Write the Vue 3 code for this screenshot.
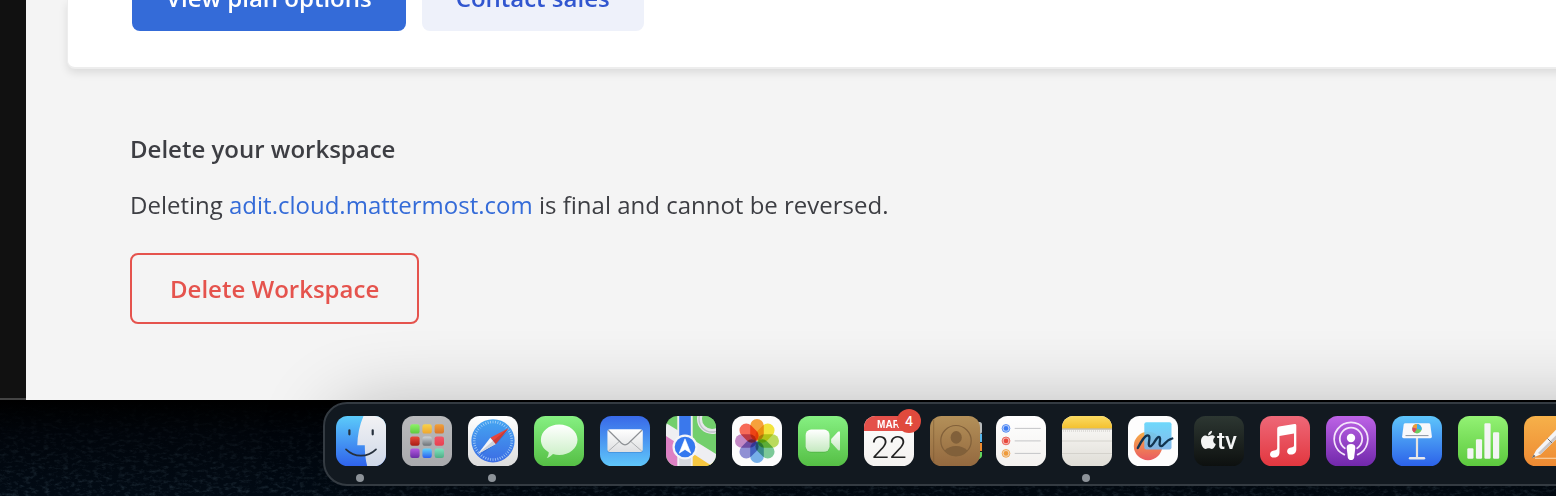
<script setup>
const petals = [
  { angle: 0, color: '#f6a13c' },
  { angle: 45, color: '#f2e33c' },
  { angle: 90, color: '#bada5c' },
  { angle: 135, color: '#7cc997' },
  { angle: 180, color: '#76afe8' },
  { angle: 225, color: '#9090d4' },
  { angle: 270, color: '#c388c4' },
  { angle: 315, color: '#f76a58' },
]

const tiles = [
  ['#8df269', '#5fc93f'], ['#f8d24c', '#efa62f'], ['#f0a13a', '#d9742b'],
  ['#ea4a3c', '#a81d14'], ['#cfd5da', '#6c7277'], ['#f0566a', '#e8414f'],
  ['#b458e0', '#6a2ca5'], ['#61d3fa', '#2c5ff0'], ['#7fe3c0', '#4fae84'],
]

const reminders = ['#3b7bf3', '#e8473c', '#ee9a3a']

const gradients = [
  ['g-finder', '#5ccbfa', '#2f63ec'],
  ['g-face', '#f2f2f4', '#cfd8e8'],
  ['g-launch', '#b9babc', '#a9aaad'],
  ['g-white', '#ffffff', '#dcdcdc'],
  ['g-safari', '#45a5f1', '#3c6de4'],
  ['g-green', '#86f082', '#55bf45'],
  ['g-bubble', '#ffffff', '#c9efc4'],
  ['g-mail', '#3869e8', '#5fc6fa'],
  ['g-env', '#ffffff', '#dedfe1'],
  ['g-cam', '#ffffff', '#c5e9c0'],
  ['g-book', '#b39059', '#94693f'],
  ['g-paper', '#ffffff', '#f3f1ef'],
  ['g-notes', '#fffefd', '#dfddd6'],
  ['g-yellow', '#fbdb62', '#f3c02f'],
  ['g-sky', '#62d5fb', '#7cb4ea'],
  ['g-coral', '#f6ae45', '#ea5b62'],
  ['g-tv', '#2d3732', '#0d100f'],
  ['g-music', '#ee6878', '#e2373f'],
  ['g-pod', '#bd63e6', '#7128ab'],
  ['g-key', '#5ec6fb', '#2c62e9'],
  ['g-num', '#93f274', '#5cc93e'],
  ['g-pages', '#f6b14a', '#ee8a33'],
]

const ticks = Array.from({ length: 48 }, (_, i) => i * 7.5)
</script>

<template>
  <div class="screen">
    <svg class="defs" aria-hidden="true">
      <defs>
        <linearGradient v-for="g in gradients" :id="g[0]" :key="g[0]" x1="0" y1="0" x2="0" y2="1">
          <stop offset="0" :stop-color="g[1]" />
          <stop offset="1" :stop-color="g[2]" />
        </linearGradient>
        <linearGradient v-for="(t, i) in tiles" :id="'g-tile' + i" :key="i" x1="0" y1="0" x2="0" y2="1">
          <stop offset="0" :stop-color="t[0]" />
          <stop offset="1" :stop-color="t[1]" />
        </linearGradient>
        <clipPath id="tile-clip"><rect width="50" height="50" rx="11.5" /></clipPath>
      </defs>
    </svg>

    <div class="window">
      <aside class="sidebar"></aside>
      <main class="console">
        <section class="plan-card">
          <button class="btn primary" type="button">View plan options</button>
          <button class="btn tertiary" type="button">Contact sales</button>
        </section>
        <section class="delete-section">
          <h2>Delete your workspace</h2>
          <p>Deleting <a href="#">adit.cloud.mattermost.com</a> is final and cannot be reversed.</p>
          <button class="btn danger" type="button">Delete Workspace</button>
        </section>
      </main>
    </div>

    <div class="desktop">
      <svg class="waves" aria-hidden="true">
        <filter id="sea" x="0" y="0" width="100%" height="100%">
          <feTurbulence type="fractalNoise" baseFrequency="0.16 0.3" numOctaves="4" seed="8" />
          <feColorMatrix values="0 0 0 0 0.3  0 0 0 0 0.5  0 0 0 0 0.62  2.2 0 0 0 -1.05" />
        </filter>
        <rect width="100%" height="100%" filter="url(#sea)" />
      </svg>

      <nav class="dock" aria-label="Dock">
        <button class="app running" type="button" aria-label="Finder">
          <svg viewBox="0 0 50 50">
            <g clip-path="url(#tile-clip)">
              <rect width="50" height="50" fill="url(#g-finder)" />
              <path d="M27.5 0C23.5 9 21.5 19 21.3 29.3H28.8C28.8 37 29.5 44 31.2 50H50V0Z" fill="url(#g-face)" />
            </g>
            <path d="M13.4 14.3v4M36.7 14.3v4" stroke="#26303c" stroke-width="2.2" stroke-linecap="round" />
            <path d="M10 33.4C18.5 41.8 31.5 41.8 40 33.4" fill="none" stroke="#26303c" stroke-width="1.7" stroke-linecap="round" />
          </svg>
        </button>

        <button class="app" type="button" aria-label="Launchpad">
          <svg viewBox="0 0 50 50">
            <rect width="50" height="50" rx="11.5" fill="url(#g-launch)" />
            <rect v-for="(t, i) in tiles" :key="i" :x="8.2 + (i % 3) * 12.2" :y="8.2 + Math.floor(i / 3) * 12.2" width="9.4" height="9.4" rx="2.2" :fill="`url(#g-tile${i})`" />
          </svg>
        </button>

        <button class="app running" type="button" aria-label="Safari">
          <svg viewBox="0 0 50 50">
            <rect width="50" height="50" rx="11.5" fill="url(#g-white)" />
            <circle cx="25" cy="24.8" r="21.6" fill="url(#g-safari)" />
            <path v-for="a in ticks" :key="a" d="M25 4.7v2.6" :transform="`rotate(${a} 25 24.8)`" stroke="#b8dcfa" stroke-width=".7" />
            <path d="M11 39.5L28.6 27.5L41 14Z" fill="#1c4aa8" opacity=".35" />
            <path d="M40.5 12.2L22.3 21.7L27.7 27.9Z" fill="#e8453c" />
            <path d="M9.8 38L22.3 21.7L27.7 27.9Z" fill="#f4f5f7" />
            <path d="M9.8 38L25 24.8L27.7 27.9Z" fill="#cfd3da" />
            <path d="M40.5 12.2L25 24.8L27.7 27.9Z" fill="#c93c38" />
          </svg>
        </button>

        <button class="app" type="button" aria-label="Messages">
          <svg viewBox="0 0 50 50">
            <rect width="50" height="50" rx="11.5" fill="url(#g-green)" />
            <path d="M25.2 8.5C35.3 8.5 43.5 15.3 43.5 23.8S35.3 39 25.2 39C23 39 20.9 38.7 19 38.1C17.2 40 15 41.5 12.7 42.1C14 40.5 14.8 38.4 14.7 36.3C9.9 33.5 6.9 29 6.9 23.8C6.9 15.3 15.1 8.5 25.2 8.5Z" fill="url(#g-bubble)" />
          </svg>
        </button>

        <button class="app" type="button" aria-label="Mail">
          <svg viewBox="0 0 50 50">
            <rect width="50" height="50" rx="11.5" fill="url(#g-mail)" />
            <rect x="7.4" y="14" width="35.4" height="22.8" rx="2.6" fill="#1f5bb0" opacity=".35" />
            <rect x="7.4" y="13.3" width="35.4" height="22.6" rx="2.6" fill="url(#g-env)" />
            <path d="M8.5 35L20 24.8M41.7 35L30 24.8" stroke="#a5a8ac" stroke-width=".9" />
            <path d="M8.3 14.3L21.5 27.3Q25 30.5 28.5 27.3L41.9 14.3" fill="none" stroke="#8d9094" stroke-width="1.2" />
          </svg>
        </button>

        <button class="app" type="button" aria-label="Maps">
          <svg viewBox="0 0 50 50">
            <g clip-path="url(#tile-clip)">
              <rect width="50" height="50" fill="#72cf6c" />
              <path d="M0 16L22 30V50H0Z" fill="#dc80c4" />
              <path d="M26 34L50 48V50H26Z" fill="#f6c741" />
              <path d="M0 7L50 38V50H46L0 20Z" fill="#eeeef2" />
              <circle cx="46" cy="3" r="12.5" fill="#72cf6c" stroke="#e6e7ea" stroke-width="5" />
              <circle cx="46" cy="3" r="13" fill="none" stroke="#bfc2c8" stroke-width="1.4" />
              <path d="M11.3 0H26.7V50H11.3Z" fill="#eeeef2" />
              <path d="M13.2 0H24.8V30H13.2Z" fill="#3a78ec" />
              <path d="M13.2 34H24.8V50H13.2Z" fill="#d5d8de" />
            </g>
            <circle cx="19" cy="31" r="12.5" fill="#f5f5f7" />
            <circle cx="19" cy="31" r="10.3" fill="#3478ef" />
            <path d="M19 22.8L24.8 37.2L19 33.4L13.2 37.2Z" fill="#fff" stroke="#fff" stroke-width=".6" stroke-linejoin="round" />
          </svg>
        </button>

        <button class="app" type="button" aria-label="Photos">
          <svg viewBox="0 0 50 50">
            <rect width="50" height="50" rx="11.5" fill="#fcfcfc" />
            <g class="petals">
              <rect v-for="p in petals" :key="p.angle" x="18.2" y="3" width="13.600" height="21.500" rx="6.800" :fill="p.color" :transform="`rotate(${p.angle} 25 25)`" />
            </g>
          </svg>
        </button>

        <button class="app" type="button" aria-label="FaceTime">
          <svg viewBox="0 0 50 50">
            <rect width="50" height="50" rx="11.5" fill="url(#g-green)" />
            <rect x="7.6" y="14.5" width="24" height="22.2" rx="5.5" fill="#3c9b34" opacity=".4" />
            <rect x="7.6" y="13.6" width="24" height="22.2" rx="5.5" fill="url(#g-cam)" />
            <path d="M33.2 23Q33 24.7 33.2 26.6L40 33.9Q42 35.6 42 33V16.8Q42 14.2 40 15.7Z" fill="url(#g-cam)" />
          </svg>
        </button>

        <button class="app" type="button" aria-label="Calendar, 4 notifications">
          <svg viewBox="0 0 50 50">
            <g clip-path="url(#tile-clip)">
              <rect width="50" height="50" fill="url(#g-paper)" />
              <rect width="50" height="15" fill="#e4504a" />
            </g>
            <text class="month" x="24.5" y="11.8">MAR</text>
            <text class="day" x="25" y="42.3">22</text>
          </svg>
          <span class="badge">4</span>
        </button>

        <button class="app" type="button" aria-label="Contacts">
          <svg viewBox="0 0 50 50">
            <rect x="44" y="6" width="8" height="12" rx="2.5" fill="#b9bcbd" />
            <path d="M44 18H52V26H44Z" fill="#5ab9ee" />
            <path d="M44 27H52V35H44Z" fill="#ee8b30" />
            <path d="M44 36H52V40Q51 43 46 44H44Z" fill="#62d45d" />
            <rect width="50" height="50" rx="11.5" fill="url(#g-book)" />
            <path d="M3.7 3.5V46.5" stroke="#7c5a33" stroke-width="1" opacity=".6" />
            <circle cx="26" cy="24.7" r="15.2" fill="none" stroke="#81603a" stroke-width="1.2" />
            <ellipse cx="26.2" cy="21.4" rx="5.6" ry="6.3" fill="#81603a" />
            <path d="M14.6 34.5Q19 30 26 30T37.4 34.5Q33 40 26 40T14.6 34.5Z" fill="#81603a" />
          </svg>
        </button>

        <button class="app" type="button" aria-label="Reminders">
          <svg viewBox="0 0 50 50">
            <rect width="50" height="50" rx="11.5" fill="url(#g-paper)" />
            <g v-for="(c, i) in reminders" :key="c">
              <circle cx="10" :cy="12.4 + i * 12.5" r="3.9" :fill="c" fill-opacity=".35" :stroke="c" stroke-opacity=".75" stroke-width="1" />
              <circle cx="10" :cy="12.4 + i * 12.5" r="2.3" :fill="c" />
              <path :d="`M18.7 ${12.4 + i * 12.5}H44.7`" stroke="#c4c5c8" stroke-width="1" />
            </g>
          </svg>
        </button>

        <button class="app running" type="button" aria-label="Notes">
          <svg viewBox="0 0 50 50">
            <g clip-path="url(#tile-clip)">
              <rect width="50" height="50" fill="url(#g-notes)" />
              <rect width="50" height="12.5" fill="url(#g-yellow)" />
              <path d="M0 13H50" stroke="#a8a08a" stroke-width="1" />
              <path d="M1 15H49" stroke="#c9c8c4" stroke-width="1" stroke-dasharray="1 1" />
              <path d="M0 25H50M0 37.5H50" stroke="#cfcdc7" stroke-width=".8" />
            </g>
          </svg>
        </button>

        <button class="app" type="button" aria-label="Freeform">
          <svg viewBox="0 0 50 50">
            <rect width="50" height="50" rx="11.5" fill="#fdfdfd" />
            <circle cx="20" cy="30" r="14.2" fill="url(#g-coral)" />
            <rect x="16.3" y="6.3" width="27.2" height="27.2" rx="2" fill="url(#g-sky)" fill-opacity=".92" />
            <path d="M9.8 32C13 26 16.5 19.3 19.7 19.3C24 19.3 18.5 30 22 30.3C25.5 30.5 28 20.6 31 21C34 21.4 29.5 30 33 30.2C36.5 30.3 36.5 24.5 44.3 22.5" fill="none" stroke="#123450" stroke-width="2.3" stroke-linecap="round" />
          </svg>
        </button>

        <button class="app" type="button" aria-label="Apple TV">
          <svg viewBox="0 0 50 50">
            <rect width="50" height="50" rx="11.5" fill="url(#g-tv)" />
            <path d="M18 14.7C18.1 16.9 16.2 19.2 14.1 19.2C13.9 17 15.900 14.900 18 14.700Z" fill="#f4f5f5" />
            <path d="M14.400 20.300C15.300 20.300 16.500 19.200 18.100 19.300C19.300 19.300 20.500 19.900 21.200 20.900C18.300 22.700 18.700 26.800 21.800 28C21.100 30.200 19.700 33 17.800 33C16.600 33 16.100 32.300 14.700 32.300C13.300 32.300 12.700 33 11.600 33C9.200 33 7 28.600 7 25.200C7 21.400 9.300 19.400 11.700 19.400C12.900 19.400 13.700 20.300 14.400 20.300Z" fill="#f4f5f5" />
            <text class="tv" x="23" y="32.7">tv</text>
          </svg>
        </button>

        <button class="app" type="button" aria-label="Music">
          <svg viewBox="0 0 50 50">
            <rect width="50" height="50" rx="11.5" fill="url(#g-music)" />
            <path d="M17.2 12.8Q17.2 11 19 10.6L34.500 8.100Q36.300 7.800 36.300 9.500V33.500C36.300 36.500 34.200 38.600 31 38.600C28.700 38.600 27.100 37.300 27.100 35.400C27.100 33.300 28.600 32 31 31.500C33 31.100 34 30.800 34 29.500V17.500L19.500 20V36.500C19.500 39.500 17.400 41.600 14 41.600C11.500 41.600 10 40.300 10 38.400C10 36.300 11.500 35 14 34.500C16.200 34.100 17.200 33.700 17.200 32Z" fill="#fff" />
          </svg>
        </button>

        <button class="app" type="button" aria-label="Podcasts">
          <svg viewBox="0 0 50 50">
            <rect width="50" height="50" rx="11.5" fill="url(#g-pod)" />
            <path d="M18.3 38.6A16.8 16.8 0 1 1 31.7 38.6" fill="none" stroke="#f4e4fb" stroke-width="1.8" stroke-linecap="round" />
            <path d="M18.8 32.2A11.2 11.2 0 1 1 31.2 32.2" fill="none" stroke="#f4e4fb" stroke-width="1.8" stroke-linecap="round" />
            <circle cx="25" cy="22" r="4.2" fill="#fff" />
            <path d="M25 28C28 28 29.5 29.5 29.3 32L28.2 41.2Q27.8 44 25 44T21.8 41.2L20.7 32C20.5 29.5 22 28 25 28Z" fill="#fff" />
          </svg>
        </button>

        <button class="app" type="button" aria-label="Keynote">
          <svg viewBox="0 0 50 50">
            <rect width="50" height="50" rx="11.5" fill="url(#g-key)" />
            <path d="M25 21V42" stroke="#e6e3df" stroke-width="2.2" />
            <path d="M18 42.2H32" stroke="#e8e8ec" stroke-width="2.4" stroke-linecap="round" />
            <path d="M13.4 7.2H36.6Q38 7.2 38.3 8.6L39.9 20.5Q40 22.3 38.3 22.3H11.7Q10 22.3 10.1 20.5L11.7 8.6Q12 7.2 13.4 7.2Z" fill="#f8f8fb" />
            <path d="M13.5 19.6H36.5" stroke="#8a93a2" stroke-width="1" />
            <circle cx="25" cy="12.8" r="4.7" fill="#6ccc62" />
            <path d="M25 12.8V8.1A4.7 4.7 0 0 1 29.5 14.1Z" fill="#3dacef" />
            <path d="M25 12.8L20.5 11.4A4.7 4.7 0 0 1 25 8.1Z" fill="#f09b38" />
            <path d="M25 12.8L22.4 16.7A4.7 4.7 0 0 1 20.5 11.4Z" fill="#d94664" />
          </svg>
        </button>

        <button class="app" type="button" aria-label="Numbers">
          <svg viewBox="0 0 50 50">
            <rect width="50" height="50" rx="11.5" fill="url(#g-num)" />
            <g fill="#f3f5f4">
              <rect x="9.3" y="32.3" width="6.2" height="10.5" rx="1.2" />
              <rect x="17.9" y="23.3" width="6.2" height="19.5" rx="1.2" />
              <rect x="26.4" y="7.3" width="6.2" height="35.5" rx="1.2" />
              <rect x="35" y="16.2" width="6.2" height="26.6" rx="1.2" />
            </g>
          </svg>
        </button>

        <button class="app" type="button" aria-label="Pages">
          <svg viewBox="0 0 50 50">
            <rect width="50" height="50" rx="11.5" fill="url(#g-pages)" />
            <path d="M11 42.3H42" stroke="#f8cfa2" stroke-width="1.2" />
            <path d="M7.8 42.2L12.3 34L37 8.5L42 13.5L16.5 38.5Z" fill="#f5f4f5" />
            <path d="M16.5 38.5L42 13.5L40 11.5L14 37Z" fill="#c9c5c6" />
            <path d="M7.8 42.2L9.8 38.5L11.6 40.3Z" fill="#6e6864" />
            <path d="M23.5 22.5L28 27" stroke="#77706c" stroke-width="1" />
          </svg>
        </button>
      </nav>
    </div>
  </div>
</template>

<style>
body {
  margin: 0;
  background: #000;
}
</style>

<style scoped>
.screen {
  display: flex;
  flex-direction: column;
  min-height: 100vh;
  overflow: hidden;
  font-family: "Open Sans", "Noto Sans", sans-serif;
  font-size: 24px;
  line-height: 32px;
  color: #3d3e43;
}

.defs {
  position: absolute;
  width: 0;
  height: 0;
}

.window {
  flex: 1;
  display: flex;
  background: #f4f4f4;
}

.sidebar {
  flex: none;
  width: 26px;
  box-sizing: border-box;
  background: #111;
  border-bottom: 2px solid #444;
}

.console {
  flex: 1;
  min-width: 0;
  padding-left: 41px;
}

.plan-card {
  display: flex;
  align-items: flex-end;
  gap: 16px;
  height: 31px;
  margin-right: -16px;
  padding: 0 64px 36px;
  background: #fff;
  border: solid #ededed;
  border-width: 0 0 2px 1px;
  border-radius: 0 0 0 8px;
  box-shadow: 0 4px 8px rgba(0, 0, 0, 0.1);
}

.btn {
  flex: none;
  font: inherit;
  font-weight: 600;
  border: 0;
  border-radius: 8px;
  padding: 17px 34px;
  cursor: pointer;
}

.primary {
  background: #346bd8;
  color: #fff;
}

.tertiary {
  background: #eef1fa;
  color: #3156cf;
}

.delete-section {
  padding: 64px 63px 76px;
}

.delete-section h2 {
  margin: 0 0 24px;
  font-size: 24px;
  font-weight: 600;
}

.delete-section p {
  margin: 0 0 32px;
}

.delete-section a {
  color: #346bd8;
  text-decoration: none;
}

.danger {
  padding: 18px 38px 17px;
  border: 2px solid #e5534d;
  background: transparent;
  color: #e5534d;
}

.desktop {
  flex: none;
  position: relative;
  display: flex;
  height: 94px;
  padding: 2px 0 0 323px;
  background: linear-gradient(#000 0%, #01050b 35%, #020b15 100%);
}

.waves {
  position: absolute;
  inset: 0;
  width: 100%;
  height: 100%;
  opacity: 0.2;
  mask-image: linear-gradient(transparent, #000);
}

.dock {
  position: relative;
  flex: none;
  display: flex;
  align-items: flex-start;
  gap: 16px;
  box-sizing: border-box;
  height: 84px;
  padding: 12px 90px 0 11px;
  border: 2px solid #343b42;
  border-radius: 24px;
  background: #121920;
  box-shadow: 16px 12px 80px rgba(0, 0, 0, 0.32);
}

.app {
  position: relative;
  flex: none;
  width: 50px;
  height: 50px;
  padding: 0;
  border: 0;
  background: none;
  cursor: pointer;
}

.app svg {
  display: block;
  width: 100%;
  height: 100%;
  overflow: visible;
}

.running::after {
  content: "";
  position: absolute;
  left: 20px;
  top: 58px;
  width: 8px;
  height: 8px;
  border-radius: 50%;
  background: #8d9399;
}

.petals {
  isolation: isolate;
}

.petals rect {
  mix-blend-mode: multiply;
}

.month {
  font: 700 10px "Liberation Sans", sans-serif;
  fill: #fff;
  text-anchor: middle;
}

.day {
  font: 300 32px Roboto, sans-serif;
  fill: #222;
  text-anchor: middle;
}

.tv {
  font: 500 24px Roboto, sans-serif;
  fill: #f4f5f5;
}

.badge {
  position: absolute;
  top: -7px;
  right: -7px;
  width: 24px;
  height: 24px;
  border-radius: 50%;
  background: #e04a3d;
  color: #fff;
  font: 500 13px/24px Inter, sans-serif;
  text-align: center;
}
</style>
